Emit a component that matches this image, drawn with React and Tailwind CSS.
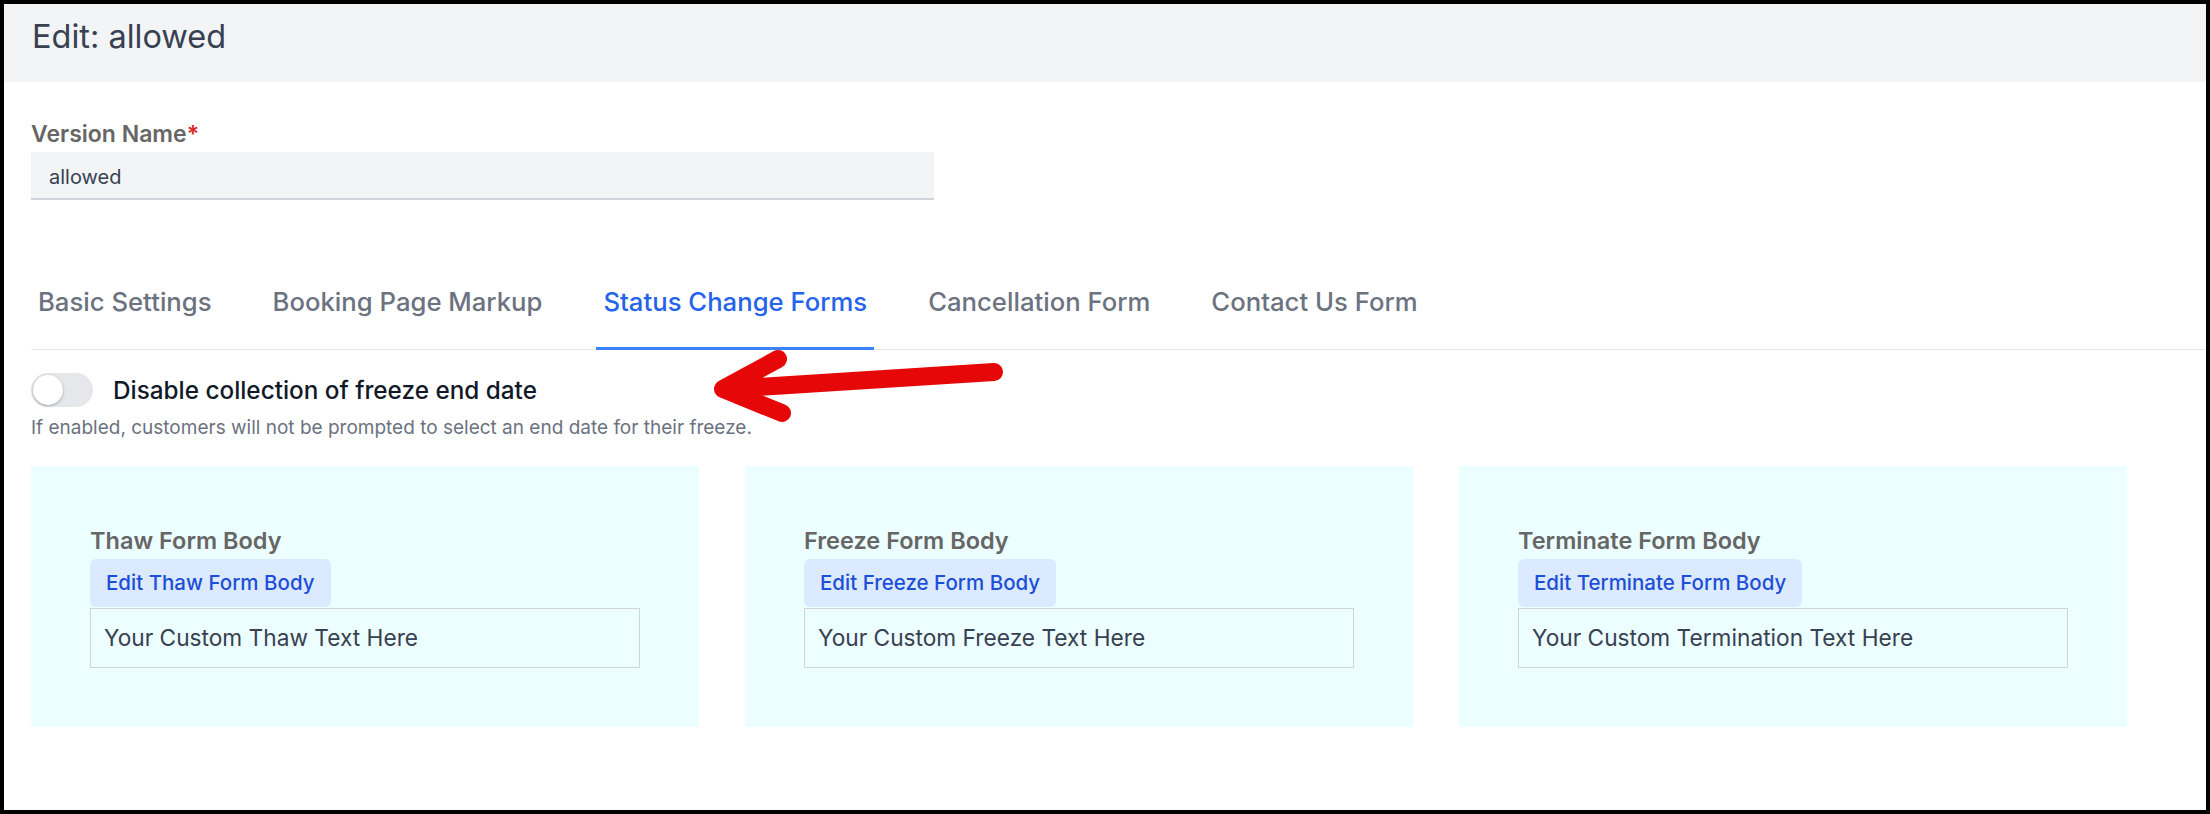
import React from 'react'

const tabs = ['Basic Settings', 'Booking Page Markup', 'Status Change Forms', 'Cancellation Form', 'Contact Us Form']

const forms = [
  { title: 'Thaw Form Body', button: 'Edit Thaw Form Body', text: 'Your Custom Thaw Text Here' },
  { title: 'Freeze Form Body', button: 'Edit Freeze Form Body', text: 'Your Custom Freeze Text Here' },
  { title: 'Terminate Form Body', button: 'Edit Terminate Form Body', text: 'Your Custom Termination Text Here' },
]

function FormCard({ title, button, text }) {
  return (
    <div className="flex flex-col items-start bg-[#ecfeff] px-[59px] pt-[60px] pb-[59px]">
      <p className="text-[23.5px] leading-[30px] font-semibold text-[#666666]">{title}</p>
      <button className="mt-[3px] h-[48px] px-[16px] rounded-md bg-[#dbeafe] text-[20.5px] font-medium text-[#1d4ed8]">
        {button}
      </button>
      <div className="mt-px h-[60px] w-full flex items-center border border-[#d1d5db] px-[13px] text-[22.7px] text-[#374151]">
        {text}
      </div>
    </div>
  )
}

export default function App() {
  const active = 'Status Change Forms'

  return (
    <div className="relative w-[2210px] h-[814px] bg-black p-1 font-[Inter,sans-serif]">
      <div className="h-full bg-white overflow-hidden">
        {/* Page header */}
        <div className="h-[78px] bg-[#f3f4f6] pl-[28px] pt-[14px]">
          <h1 className="text-[32.5px] leading-[38px] text-[#374151]">Edit: allowed</h1>
        </div>

        <div className="pl-[27px]">
          {/* Version name */}
          <div className="w-[903px] mt-[37px]">
            <label className="block text-[23px] leading-[30px] font-semibold text-[#666666]">
              Version Name<span className="text-[#dc2626]">*</span>
            </label>
            <div className="mt-[3px] h-[48px] flex items-center pt-[3px] bg-[#f3f4f6] border-b-2 border-[#d1d5db] pl-[18px] text-[20px] text-[#374151]">
              allowed
            </div>
          </div>

          {/* Tabs */}
          <div className="mt-[85px] flex gap-[47px] border-b border-[#e5e7eb]">
            {tabs.map(t => (
              <button
                key={t}
                className={
                  t === active
                    ? '-mb-px px-[7px] pb-[28px] border-b-[3px] border-[#3b82f6] text-[25.7px] leading-[34px] font-medium text-[#2563eb]'
                    : '-mb-px px-[7px] pb-[28px] border-b-[3px] border-transparent text-[25.7px] leading-[34px] font-medium text-[#6b7280]'
                }>
                {t}
              </button>
            ))}
          </div>

          {/* Toggle */}
          <div className="mt-[23px] flex items-center gap-[20px]">
            <div className="w-[62px] h-[34px] rounded-full bg-[#e5e7eb] p-[2px]">
              <div className="w-[30px] h-[30px] rounded-full bg-white shadow-[0_1px_3px_rgba(0,0,0,0.3)]" />
            </div>
            <span className="text-[24.3px] leading-[30px] font-medium text-[#111827]">
              Disable collection of freeze end date
            </span>
          </div>
          <p className="mt-[9px] text-[19px] leading-[24px] text-[#6b7280]">
            If enabled, customers will not be prompted to select an end date for their freeze.
          </p>

          {/* Form cards */}
          <div className="mt-[26px] w-[2096px] grid grid-cols-3 gap-[46px]">
            {forms.map(f => <FormCard key={f.title} {...f} />)}
          </div>
        </div>
      </div>

      {/* Red annotation arrow */}
      <svg className="absolute left-0 top-0 pointer-events-none" width="2210" height="814" viewBox="0 0 2210 814">
        <path
          d="M994 372 L726 389 M778 359 L723 389 L782 413"
          fill="none"
          stroke="#e60808"
          strokeWidth="18"
          strokeLinecap="round"
          strokeLinejoin="round"
        />
      </svg>
    </div>
  )
}
